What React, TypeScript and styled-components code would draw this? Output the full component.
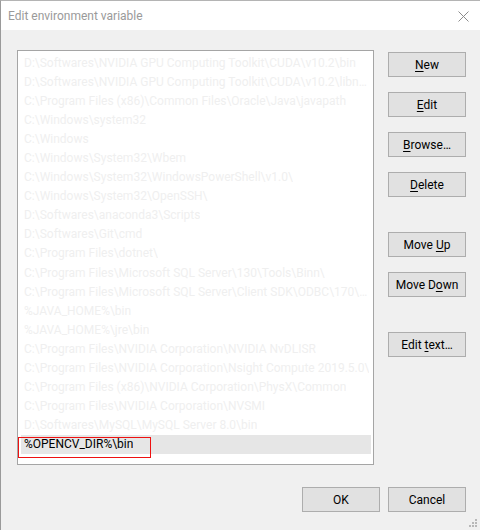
import React from "react";
import styled, { createGlobalStyle } from "styled-components";

const Global = createGlobalStyle`
  html, body { margin: 0; padding: 0; background: #f0f0f0; }
  body { font-family: Roboto, "Noto Sans", sans-serif; font-size: 12px; }
`;

const Window = styled.div`
  width: 480px;
  height: 530px;
  box-sizing: border-box;
  border-left: 1px solid #9a9a9a;
  border-top: 1px solid #b4b4b4;
  background: #f0f0f0;
  display: flex;
  flex-direction: column;
  position: relative;
  overflow: hidden;
`;

const TitleBar = styled.div`
  height: 29px;
  background: #ffffff;
  display: flex;
  align-items: center;
  justify-content: space-between;
  padding: 0 11px 0 7px;
  flex: none;
`;

const Title = styled.span`
  color: #9a9a9a;
  font-size: 12px;
  padding-top: 1px;
`;

const Close = styled.svg`
  width: 11px;
  height: 11px;
  margin-top: 2px;
`;

const Body = styled.div`
  display: flex;
  padding: 20px 14px 0 16px;
  gap: 14px;
`;

const ListBox = styled.div`
  width: 357px;
  height: 415px;
  box-sizing: border-box;
  border: 1px solid #a5a5a5;
  background: #ffffff;
  padding: 2px 2px 0 3px;
  display: flex;
  flex-direction: column;
`;

const Row = styled.div<{ $selected?: boolean }>`
  height: 19.1px;
  flex: none;
  display: flex;
  align-items: center;
  padding-left: 3px;
  color: ${(p) => (p.$selected ? "#000000" : "#efefef")};
  background: ${(p) => (p.$selected ? "#e6e6e6" : "transparent")};
  position: relative;
`;

const RowText = styled.span`
  white-space: nowrap;
  overflow: hidden;
  text-overflow: ellipsis;
`;

const Highlight = styled.span`
  position: absolute;
  left: -3px;
  top: 2px;
  width: 133px;
  height: 21px;
  box-sizing: border-box;
  border: 1.5px solid #ee1111;
`;

const ButtonColumn = styled.div`
  display: flex;
  flex-direction: column;
  padding-top: 2px;
`;

const Button = styled.div<{ $gap?: number }>`
  width: 78px;
  height: 25px;
  box-sizing: border-box;
  border: 1px solid #adadad;
  background: #e1e1e1;
  color: #000;
  display: flex;
  align-items: center;
  justify-content: center;
  margin-top: ${(p) => p.$gap ?? 0}px;
  flex: none;
  white-space: nowrap;
`;

const U = styled.span`
  text-decoration: underline;
  text-underline-offset: 2px;
`;

const Footer = styled.div`
  display: flex;
  justify-content: flex-end;
  gap: 8px;
  padding: 22px 14px 0 0;
`;

const Grip = styled.svg`
  position: absolute;
  right: 3px;
  bottom: 3px;
  width: 8px;
  height: 8px;
`;

const paths = [
  "D:\\Softwares\\NVIDIA GPU Computing Toolkit\\CUDA\\v10.2\\bin",
  "D:\\Softwares\\NVIDIA GPU Computing Toolkit\\CUDA\\v10.2\\libnvvp",
  "C:\\Program Files (x86)\\Common Files\\Oracle\\Java\\javapath",
  "C:\\Windows\\system32",
  "C:\\Windows",
  "C:\\Windows\\System32\\Wbem",
  "C:\\Windows\\System32\\WindowsPowerShell\\v1.0\\",
  "C:\\Windows\\System32\\OpenSSH\\",
  "D:\\Softwares\\anaconda3\\Scripts",
  "D:\\Softwares\\Git\\cmd",
  "C:\\Program Files\\dotnet\\",
  "C:\\Program Files\\Microsoft SQL Server\\130\\Tools\\Binn\\",
  "C:\\Program Files\\Microsoft SQL Server\\Client SDK\\ODBC\\170\\Tools\\Binn\\",
  "%JAVA_HOME%\\bin",
  "%JAVA_HOME%\\jre\\bin",
  "C:\\Program Files\\NVIDIA Corporation\\NVIDIA NvDLISR",
  "C:\\Program Files\\NVIDIA Corporation\\Nsight Compute 2019.5.0\\",
  "C:\\Program Files (x86)\\NVIDIA Corporation\\PhysX\\Common",
  "C:\\Program Files\\NVIDIA Corporation\\NVSMI",
  "D:\\Softwares\\MySQL\\MySQL Server 8.0\\bin",
];

export default function App() {
  return (
    <>
      <Global />
      <Window>
        <TitleBar>
          <Title>Edit environment variable</Title>
          <Close viewBox="0 0 11 11">
            <path d="M0.5 0.5 L10.5 10.5 M10.5 0.5 L0.5 10.5" stroke="#8c8c8c" strokeWidth="1" fill="none" />
          </Close>
        </TitleBar>
        <Body>
          <ListBox>
            {paths.map((p) => (
              <Row key={p}>
                <RowText>{p}</RowText>
              </Row>
            ))}
            <Row $selected>
              <RowText>%OPENCV_DIR%\bin</RowText>
              <Highlight />
            </Row>
          </ListBox>
          <ButtonColumn>
            <Button><span><U>N</U>ew</span></Button>
            <Button $gap={15}><span><U>E</U>dit</span></Button>
            <Button $gap={15}><span><U>B</U>rowse…</span></Button>
            <Button $gap={15}><span><U>D</U>elete</span></Button>
            <Button $gap={35}><span>Move <U>U</U>p</span></Button>
            <Button $gap={15}><span>Move D<U>o</U>wn</span></Button>
            <Button $gap={35}><span>Edit <U>t</U>ext…</span></Button>
          </ButtonColumn>
        </Body>
        <Footer>
          <Button>OK</Button>
          <Button>Cancel</Button>
        </Footer>
        <Grip viewBox="0 0 8 8">
          <rect x="6" y="0" width="2" height="2" fill="#b8b8b8" />
          <rect x="3" y="3" width="2" height="2" fill="#b8b8b8" />
          <rect x="6" y="3" width="2" height="2" fill="#b8b8b8" />
          <rect x="0" y="6" width="2" height="2" fill="#b8b8b8" />
          <rect x="3" y="6" width="2" height="2" fill="#b8b8b8" />
          <rect x="6" y="6" width="2" height="2" fill="#b8b8b8" />
        </Grip>
      </Window>
    </>
  );
}
